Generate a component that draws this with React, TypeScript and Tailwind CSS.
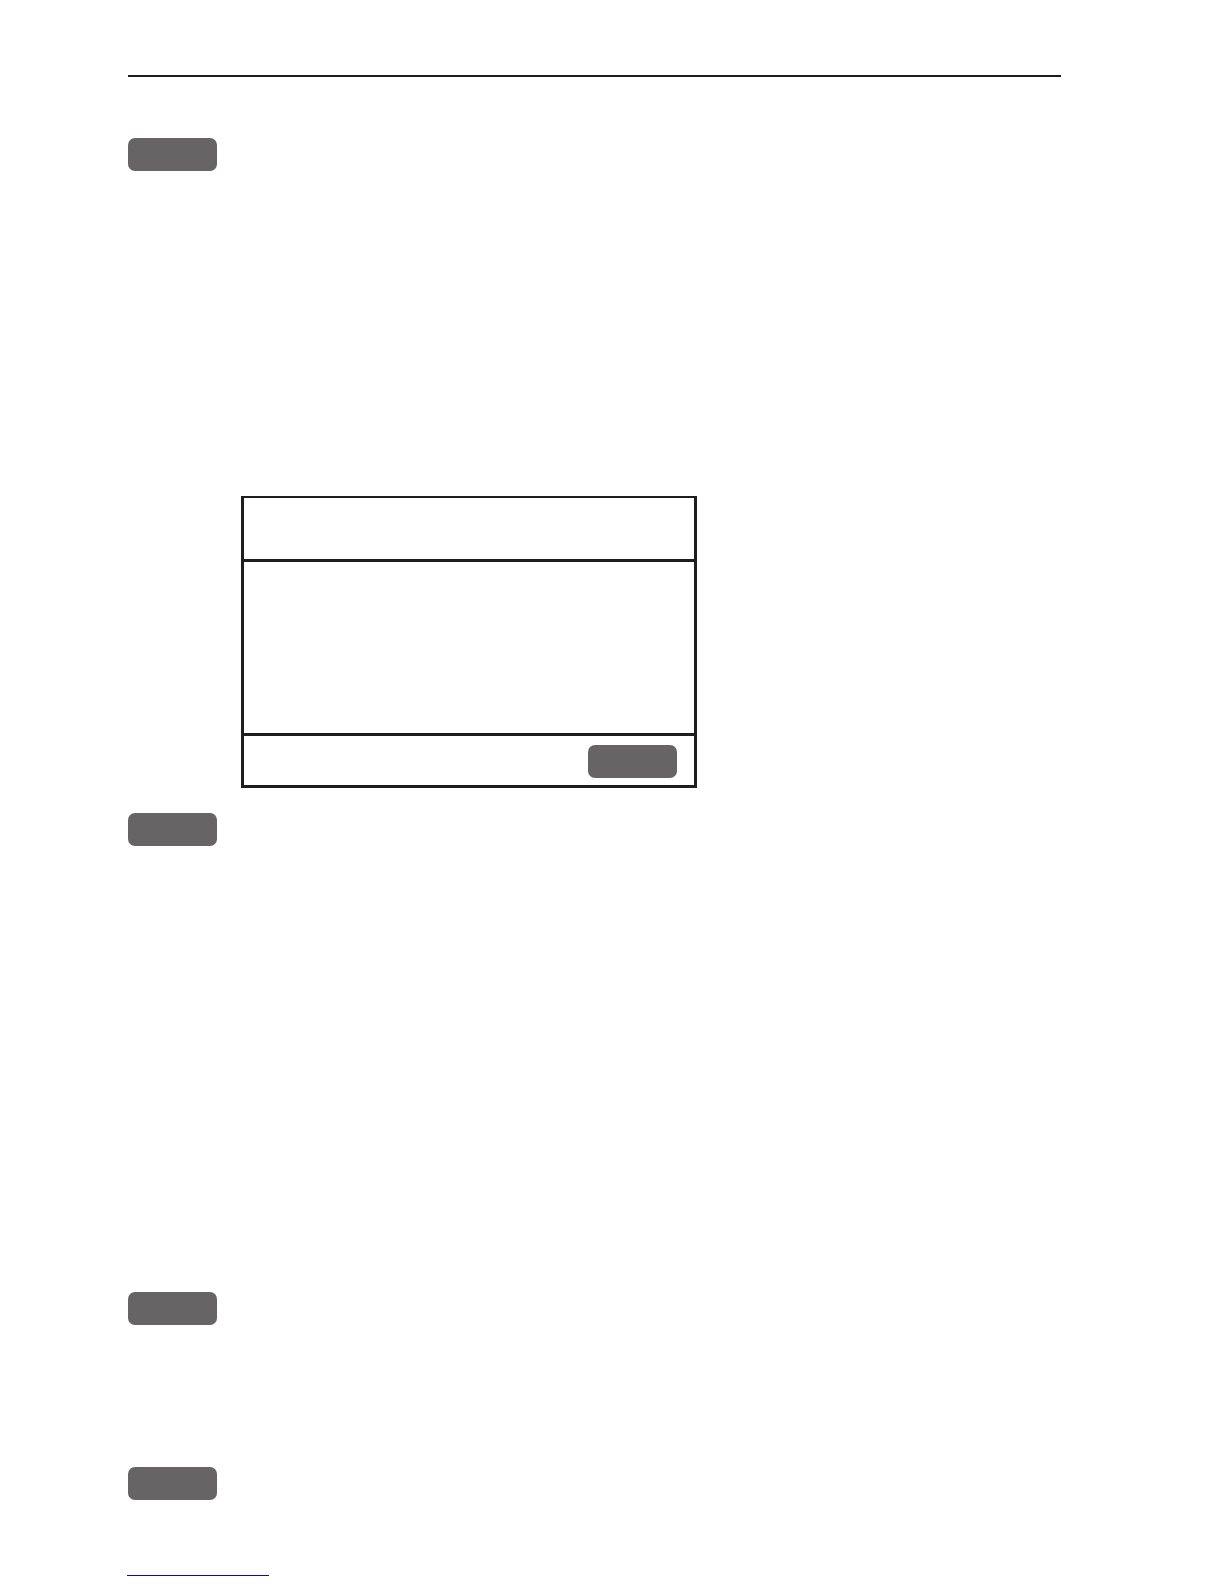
function Key() {
  return <button type="button" aria-label="Key" className="block h-[33px] w-[89px] shrink-0 rounded-[7px] bg-[#666465]" />;
}

export default function App() {
  return (
    <div className="min-h-screen bg-white pb-2 font-['Liberation_Sans',sans-serif]">
      <main className="flex flex-col pr-[163px] pl-32">
        <header className="mt-[75px] border-t-2 border-[#1f1d1e]" />

        <section className="pt-[61px]">
          <Key />
          <div className="mt-[325px] ml-[113px] flex w-full max-w-[456px] flex-col border-3 border-t-2 border-[#1f1d1e]">
            <div className="h-16 border-b-3 border-[#1f1d1e]" />
            <div className="h-[174px] border-b-3 border-[#1f1d1e]" />
            <div className="flex h-[49px] justify-end pt-[9px] pr-[17px]">
              <Key />
            </div>
          </div>
        </section>

        <section className="pt-[25px]">
          <Key />
        </section>

        <section className="pt-[446px]">
          <Key />
        </section>

        <section className="pt-[142px]">
          <Key />
        </section>
      </main>

      <footer className="pt-[75px] pl-[127px]">
        <a href="#top" aria-label="Link" className="block h-px w-[142px] bg-[#0c0ca8]" />
      </footer>
    </div>
  );
}
